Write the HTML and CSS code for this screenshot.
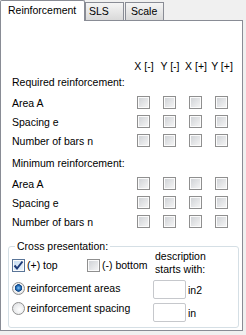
FILE: index.html
```html
<!DOCTYPE html>
<html lang="en">
<head>
  <meta charset="UTF-8">
  <title>Reinforcement</title>
  <link rel="stylesheet" href="styles.css">
</head>
<body>

<div class="tabs">
  <div class="tab active">Reinforcement</div>
  <div class="tab sls">SLS</div>
  <div class="tab scale">Scale</div>
</div>

<div class="panel">
  <div class="matrix">
    <div class="row head">
      <span class="lbl"></span>
      <span class="col">X [-]</span>
      <span class="col">Y [-]</span>
      <span class="col">X [+]</span>
      <span class="col">Y [+]</span>
    </div>

    <div class="title">Required reinforcement:</div>
    <div class="row">
      <span class="lbl">Area A</span>
      <span class="col"><i class="cb"></i></span><span class="col"><i class="cb"></i></span><span class="col"><i class="cb"></i></span><span class="col"><i class="cb"></i></span>
    </div>
    <div class="row">
      <span class="lbl">Spacing e</span>
      <span class="col"><i class="cb"></i></span><span class="col"><i class="cb"></i></span><span class="col"><i class="cb"></i></span><span class="col"><i class="cb"></i></span>
    </div>
    <div class="row">
      <span class="lbl">Number of bars n</span>
      <span class="col"><i class="cb"></i></span><span class="col"><i class="cb"></i></span><span class="col"><i class="cb"></i></span><span class="col"><i class="cb"></i></span>
    </div>

    <div class="title second">Minimum reinforcement:</div>
    <div class="row">
      <span class="lbl">Area A</span>
      <span class="col"><i class="cb"></i></span><span class="col"><i class="cb"></i></span><span class="col"><i class="cb"></i></span><span class="col"><i class="cb"></i></span>
    </div>
    <div class="row">
      <span class="lbl">Spacing e</span>
      <span class="col"><i class="cb"></i></span><span class="col"><i class="cb"></i></span><span class="col"><i class="cb"></i></span><span class="col"><i class="cb"></i></span>
    </div>
    <div class="row">
      <span class="lbl">Number of bars n</span>
      <span class="col"><i class="cb"></i></span><span class="col"><i class="cb"></i></span><span class="col"><i class="cb"></i></span><span class="col"><i class="cb"></i></span>
    </div>
  </div>

  <fieldset class="cross">
    <legend>Cross presentation:</legend>
    <div class="cross-body">
      <div class="left">
        <div class="checks">
          <label class="opt top">
            <i class="cb checked">
              <svg width="11" height="11" viewBox="0 0 11 11"><path d="M1.5 5.5 L4 8.5 L9.5 1.5" fill="none" stroke="#1d3a78" stroke-width="2"/></svg>
            </i>(+) top
          </label>
          <label class="opt"><i class="cb"></i>(-) bottom</label>
        </div>
        <label class="opt radio-row"><i class="rb on"></i>reinforcement areas</label>
        <label class="opt radio-row"><i class="rb"></i>reinforcement spacing</label>
      </div>
      <div class="right">
        <div class="desc">description<br>starts with:</div>
        <div class="unit first"><span class="field"></span>in2</div>
        <div class="unit"><span class="field"></span>in</div>
      </div>
    </div>
  </fieldset>
</div>

</body>
</html>
```

FILE: styles.css
```css
* {
  margin: 0;
  padding: 0;
  box-sizing: border-box;
}

body {
  font-family: 'Liberation Sans', Arial, sans-serif;
  font-size: 10.5px;
  color: #000;
  background: #f0f0f0;
  width: 246px;
  height: 335px;
  overflow: hidden;
}

/* Onglets */
.tabs {
  display: flex;
  align-items: flex-end;
  height: 20px;
}

.tab {
  height: 18px;
  line-height: 17px;
  border: 1px solid #898c95;
  border-bottom: none;
  background: linear-gradient(#f5f5f5, #d9d9d9);
  padding-left: 3px;
}

.tab.active {
  position: relative;
  z-index: 1;
  width: 85px;
  height: 21px;
  line-height: 19px;
  margin-bottom: -1px;
  background: #fff;
  border-radius: 2px 2px 0 0;
  padding-left: 7px;
}

.tab.sls {
  width: 39px;
}

.tab.scale {
  width: 39px;
  margin-left: 1px;
  padding-left: 5px;
}

/* Panneau */
.panel {
  width: 243px;
  height: 311px;
  background: #fff;
  border: 1px solid #898c95;
  padding: 37px 0 0 7px;
}

.matrix {
  padding-left: 4px;
}

.row {
  display: grid;
  grid-template-columns: 119px repeat(4, 26px);
  align-items: center;
  height: 19px;
}

.row.head {
  height: 16px;
}

.head .col {
  text-align: center;
  white-space: nowrap;
}

.col .cb {
  margin-left: 6px;
}

.title {
  height: 16px;
  line-height: 16px;
  margin-bottom: 3px;
}

.title.second {
  margin-top: 5px;
}

/* Cases à cocher */
.cb {
  display: block;
  position: relative;
  width: 13px;
  height: 13px;
  border: 1px solid #8f8f8f;
  background: linear-gradient(135deg, #cdd0d4, #f7f7f7);
  box-shadow: inset 0 0 0 1px #fbfbfb;
}

.cb.checked {
  border-color: #5a7598;
  background: linear-gradient(135deg, #c4dbf1, #eef5fc);
}

.cb svg {
  display: block;
}

.rb {
  display: block;
  width: 13px;
  height: 13px;
  border-radius: 50%;
  border: 1px solid #8f8f8f;
  background: radial-gradient(circle at 60% 60%, #ffffff, #d9dbde);
}

.rb.on {
  background: radial-gradient(circle at 50% 45%, #8cc4f2 0, #2a78c4 2px, #174d8c 3px, #174d8c 3.5px, #f3f3f3 4px, #d4d6d9 100%);
}

/* Cadre */
.cross {
  margin-top: 9px;
  width: 231px;
  height: 88px;
  border: 1px solid #d5dfe5;
  border-radius: 3px;
}

.cross legend {
  margin-left: 6px;
  padding: 0 2px;
  line-height: 13px;
}

.cross-body {
  display: flex;
}

.left {
  width: 144px;
  padding: 4px 0 0 3px;
}

.checks {
  display: flex;
  height: 16px;
  align-items: center;
}

.opt {
  display: flex;
  align-items: center;
  gap: 2px;
  white-space: nowrap;
}

.opt.top {
  width: 75px;
}

.radio-row {
  height: 18px;
  margin-top: 6px;
}

.radio-row + .radio-row {
  margin-top: 2px;
}

.right {
  margin-top: -3px;
}

.desc {
  line-height: 13px;
  padding-left: 2px;
}

.unit {
  display: flex;
  align-items: center;
  gap: 2px;
  margin-top: 4px;
}

.unit.first {
  margin-top: 4px;
}

.field {
  display: block;
  width: 33px;
  height: 19px;
  border: 1px solid #c6c8cc;
  border-radius: 2px;
  background: #fff;
}
```
